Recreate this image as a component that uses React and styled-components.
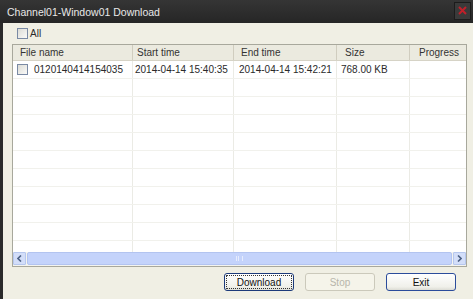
import React from 'react';
import styled, { createGlobalStyle } from 'styled-components';

const GlobalStyle = createGlobalStyle`
  html, body { margin: 0; padding: 0; background: #f0efe4; }
  body { font-family: "Liberation Sans", Arial, sans-serif; }
`;

const Window = styled.div`
  width: 473px;
  height: 299px;
  display: flex;
  flex-direction: column;
  background: #f0efe4;
  overflow: hidden;
`;

const TitleBar = styled.div`
  height: 23px;
  flex: none;
  display: flex;
  align-items: center;
  justify-content: space-between;
  padding: 0 2px 0 7px;
  background: linear-gradient(#353535, #262626);
  color: #e8e8e8;
  font-size: 10.5px;
`;

const CloseButton = styled.div`
  width: 15px;
  height: 16px;
  margin-bottom: 2px;
  display: flex;
  align-items: center;
  justify-content: center;
  background: #3a3a3a;
  border: 1px solid #1c1c1c;
`;

const Body = styled.div`
  flex: 1;
  display: flex;
  flex-direction: column;
  border-left: 3px solid #2a2a2a;
  padding: 0 6px 8px 9px;
  min-height: 0;
`;

const AllRow = styled.label`
  height: 21px;
  display: flex;
  align-items: center;
  gap: 2px;
  padding-left: 5px;
  font-size: 10px;
  color: #2a2a2a;
`;

const Check = styled.span`
  width: 9px;
  height: 9px;
  flex: none;
  border: 1px solid #7a8aa4;
  background: linear-gradient(135deg, #dcdcd6, #fafaf8);
`;

const ListView = styled.div`
  flex: 1;
  display: flex;
  flex-direction: column;
  border: 1px solid #a8a89c;
  background: #fff;
  min-height: 0;
`;

const columns = '120px 101px 103px 73px 1fr';

const HeaderRow = styled.div`
  height: 15px;
  flex: none;
  display: grid;
  grid-template-columns: ${columns};
  background: #ebeadf;
  border-bottom: 1px solid #d6d3c6;
`;

const HeaderCell = styled.div`
  display: flex;
  align-items: center;
  padding-left: ${p => p.$pad || 7}px;
  font-size: 10px;
  color: #333;
  border-right: ${p => (p.$last ? 'none' : '1px solid #d0cdbf')};
  white-space: nowrap;
`;

const Rows = styled.div`
  flex: 1;
  min-height: 0;
  overflow: hidden;
  display: flex;
  flex-direction: column;
`;

const Row = styled.div`
  height: 17px;
  flex: none;
  display: grid;
  grid-template-columns: ${columns};
  border-bottom: 1px solid #f1f1ec;
`;

const Cell = styled.div`
  display: flex;
  align-items: center;
  gap: 6px;
  padding-left: ${p => p.$pad || 3}px;
  font-size: 10px;
  color: #2a2a2a;
  border-right: ${p => (p.$last ? 'none' : '1px solid #ebebe5')};
  white-space: nowrap;
  overflow: hidden;
`;

const ScrollBar = styled.div`
  height: 13px;
  flex: none;
  display: flex;
  background: #f4f4ef;
  padding: 0 0 1px 0;
`;

const ArrowButton = styled.div`
  width: 11px;
  display: flex;
  align-items: center;
  justify-content: center;
  background: #d3def9;
  border: 1px solid #b6c7ee;
  border-radius: 1px;
`;

const Thumb = styled.div`
  flex: 1;
  margin: 0 1px;
  display: flex;
  align-items: center;
  justify-content: center;
  background: #c4d3fb;
  border: 1px solid #b3c4f0;
  border-radius: 2px;
`;

const Grip = styled.div`
  width: 5px;
  height: 5px;
  border-left: 1px solid #e6ecfd;
  border-right: 1px solid #e6ecfd;
  position: relative;
  &::after {
    content: '';
    position: absolute;
    left: 1px;
    top: 0;
    width: 1px;
    height: 5px;
    background: #e6ecfd;
  }
`;

const ButtonRow = styled.div`
  height: 24px;
  flex: none;
  display: flex;
  align-items: flex-end;
  justify-content: flex-end;
  gap: 11px;
  padding-right: 11px;
`;

const Button = styled.button`
  width: 70px;
  height: 18px;
  padding: 0;
  font-family: "Liberation Sans", Arial, sans-serif;
  font-size: 10px;
  color: ${p => (p.disabled ? '#b8b6ab' : '#111')};
  background: ${p => (p.disabled ? '#f5f4ea' : 'linear-gradient(#ffffff, #f0f0ea 80%, #dcdcd4)')};
  border: 1px solid ${p => (p.disabled ? '#cbc9bb' : p.$default ? '#2b4c9b' : '#1c3a7a')};
  border-radius: 3px;
  outline: ${p => (p.$focus ? '1px dotted #333' : 'none')};
  outline-offset: -3px;
`;

const Chevron = ({ dir }) => (
  <svg width="5" height="7" viewBox="0 0 5 7">
    <path
      d={dir === 'left' ? 'M4 0.5 L1 3.5 L4 6.5' : 'M1 0.5 L4 3.5 L1 6.5'}
      fill="none"
      stroke="#4d6185"
      strokeWidth="1.6"
    />
  </svg>
);

const rows = [
  { name: '0120140414154035', start: '2014-04-14 15:40:35', end: '2014-04-14 15:42:21', size: '768.00 KB', progress: '' },
];

const emptyRows = Array.from({ length: 11 });

export default function App() {
  return (
    <Window>
      <GlobalStyle />
      <TitleBar>
        <span>Channel01-Window01 Download</span>
        <CloseButton>
          <svg width="9" height="9" viewBox="0 0 9 9">
            <path d="M1 1 L8 8 M8 1 L1 8" stroke="#c0202a" strokeWidth="2" />
          </svg>
        </CloseButton>
      </TitleBar>
      <Body>
        <AllRow>
          <Check />
          All
        </AllRow>
        <ListView>
          <HeaderRow>
            <HeaderCell>File name</HeaderCell>
            <HeaderCell $pad={4}>Start time</HeaderCell>
            <HeaderCell>End time</HeaderCell>
            <HeaderCell $pad={8}>Size</HeaderCell>
            <HeaderCell $pad={9} $last>Progress</HeaderCell>
          </HeaderRow>
          <Rows>
            {rows.map(r => (
              <Row key={r.name}>
                <Cell $pad={4}>
                  <Check />
                  {r.name}
                </Cell>
                <Cell $pad={2}>{r.start}</Cell>
                <Cell $pad={5}>{r.end}</Cell>
                <Cell $pad={4}>{r.size}</Cell>
                <Cell $last>{r.progress}</Cell>
              </Row>
            ))}
            {emptyRows.map((_, i) => (
              <Row key={i}>
                <Cell />
                <Cell />
                <Cell />
                <Cell />
                <Cell $last />
              </Row>
            ))}
          </Rows>
          <ScrollBar>
            <ArrowButton><Chevron dir="left" /></ArrowButton>
            <Thumb>
              <Grip />
            </Thumb>
            <ArrowButton><Chevron dir="right" /></ArrowButton>
          </ScrollBar>
        </ListView>
        <ButtonRow>
          <Button $focus>Download</Button>
          <Button disabled>Stop</Button>
          <Button $default>Exit</Button>
        </ButtonRow>
      </Body>
    </Window>
  );
}
